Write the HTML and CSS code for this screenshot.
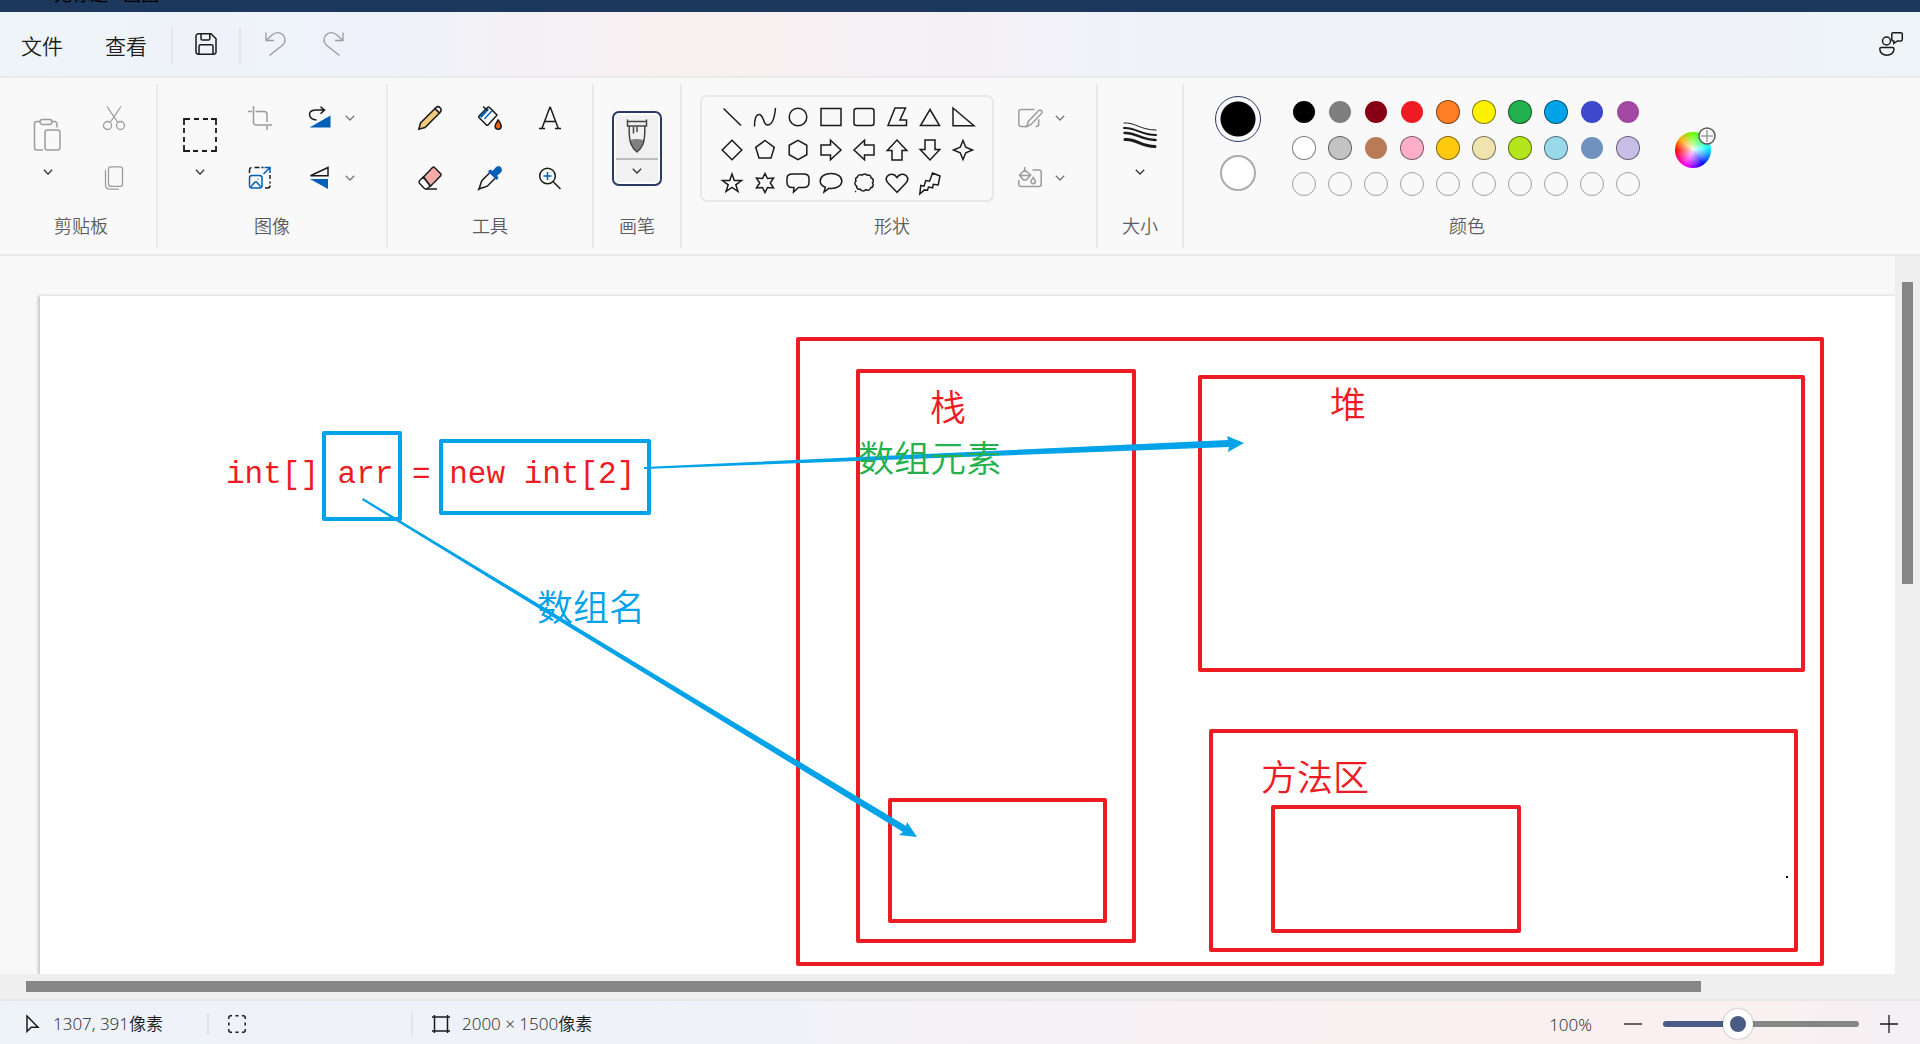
FILE: index.html
```html
<!DOCTYPE html>
<html lang="zh-CN">
<head>
<meta charset="utf-8">
<meta name="viewport" content="width=device-width, initial-scale=1">
<title>无标题 - 画图</title>
<link rel="stylesheet" href="styles.css">
</head>
<body>
<svg class="defs" aria-hidden="true">
  <symbol id="chevron" viewBox="0 0 10 6"><path d="M.8.8 5 5 9.200.8"/></symbol>
</svg>

<header class="titlebar"><span class="titlebar-text">无标题 - 画图</span></header>

<nav class="menubar">
  <button class="menu-item" type="button">文件</button>
  <button class="menu-item" type="button">查看</button>
  <span class="menu-sep"></span>
  <button class="menu-icon" type="button" aria-label="保存">
    <svg class="icon" viewBox="0 0 24 24"><path d="M4.500 1.800H17L22 6.800V20a2.200 2.200 0 0 1-2.200 2.200H4.200A2.200 2.200 0 0 1 2 20V4.300A2.500 2.500 0 0 1 4.500 1.800ZM7 2v4.700a1.300 1.300 0 0 0 1.300 1.300h6.200a1.300 1.300 0 0 0 1.300-1.300V2M5 22v-7.700A1.500 1.500 0 0 1 6.500 12.800h11a1.500 1.500 0 0 1 1.500 1.500V22"/></svg>
  </button>
  <span class="menu-sep"></span>
  <button class="menu-icon off" type="button" aria-label="撤消">
    <svg class="icon thin" viewBox="0 0 24 24"><path d="M2 .5V8.500H10M2.300 8.300 8 3C12-.5 17 0 19.500 3.500 21.800 7 21.300 10.500 18.500 13.300L5.500 23.500"/></svg>
  </button>
  <button class="menu-icon off" type="button" aria-label="重做">
    <svg class="icon thin" viewBox="0 0 24 24"><path d="M21 .5V8.500H13M20.700 8.300 15 3C11-.5 6 0 3.500 3.500 1.200 7 1.700 10.500 4.500 13.300L17.500 23.500"/></svg>
  </button>
  <button class="menu-icon share" type="button" aria-label="反馈">
    <svg class="icon" viewBox="0 0 24 24"><circle cx="7.500" cy="9" r="4"/><path d="M2 15.500h11.500a1.500 1.500 0 0 1 1.500 1.500c0 4-3.500 6.200-7.200 6.200S.8 21 .8 17A1.400 1.400 0 0 1 2 15.500ZM14 .8h8a1.300 1.300 0 0 1 1.300 1.300v5.500A1.300 1.300 0 0 1 22 8.900h-3.500l-3.700 2.500V8.900H14a1.300 1.300 0 0 1-1.200-1.300V2.100A1.300 1.300 0 0 1 14 .8Z"/></svg>
  </button>
</nav>

<div class="ribbon">
  <section class="group clipboard">
    <div class="controls">
      <button class="tool tall off" type="button" aria-label="粘贴">
        <svg class="icon big" viewBox="0 0 34 34"><path d="M12 32H6a2.500 2.500 0 0 1-2.500-2.500V6A2.500 2.500 0 0 1 6 3.500H9M20.500 3.500h3A2.500 2.500 0 0 1 26 6v3.500M11.500 1.500h7a2.500 2.500 0 0 1 0 5h-7a2.500 2.500 0 0 1 0-5Z"/><rect x="14" y="12" width="15" height="20" rx="2.500"/></svg>
        <svg class="chev dark"><use href="#chevron"/></svg>
      </button>
      <div class="pair">
        <button class="tool off" type="button" aria-label="剪切">
          <svg class="icon thin" viewBox="0 0 24 24"><path d="M5 .5 15.500 16M19 .5 8.500 16"/><circle cx="5.500" cy="19.500" r="4"/><circle cx="18.500" cy="19.500" r="4"/></svg>
        </button>
        <button class="tool off" type="button" aria-label="复制">
          <svg class="icon thin" viewBox="0 0 24 24"><rect x="6.500" y=".8" width="14" height="19.500" rx="2"/><path d="M3.500 4v14.500c0 3 1.500 4.700 4.500 4.700h9"/></svg>
        </button>
      </div>
    </div>
    <h2>剪贴板</h2>
  </section>

  <section class="group">
    <div class="controls">
      <button class="tool tall" type="button" aria-label="选择">
        <svg class="icon big" viewBox="0 0 34 34"><path stroke-width="1.800" d="M1 7V1h6M11 1h5M20 1h5M28 1h5v6M33 10v5M33 19v5M33 28v5h-5M24 33h-5M15 33h-5M7 33H1v-6M1 24v-5M1 15v-5"/></svg>
        <svg class="chev dark"><use href="#chevron"/></svg>
      </button>
      <div class="pair">
        <button class="tool off" type="button" aria-label="裁剪">
          <svg class="icon" viewBox="0 0 24 24"><path d="M0 5.500h4M7.500 5.500H16a3 3 0 0 1 3 3V16M19 20v4M5.500 0v16.500a3 3 0 0 0 3 2.500H24"/></svg>
        </button>
        <button class="tool" type="button" aria-label="重设大小">
          <svg class="icon" viewBox="0 0 24 24"><path d="M1.500 7V4a2.500 2.500 0 0 1 2-2.500M6.500 1.500h5M13.500 1.500h2M22 9v4M22 15.500v2M22 19.500a2.500 2.500 0 0 1-2.500 2.500H17"/><g class="blue"><rect x="1.500" y="9.500" width="12.500" height="12.500" rx="2.500"/><path d="m3 20.500 4-4.500h1.500l4 4.500M10 12.700v.8M15.500 8 22 1.500M16.500 1.500H22V7"/></g></svg>
        </button>
      </div>
      <div class="pair">
        <button class="tool split" type="button" aria-label="旋转">
          <svg class="icon" viewBox="0 0 24 24"><path d="M8.500 14C4.500 14 1.500 11.500 1.500 8.500S4.500 4 8.500 4h8M12.500.8 16.500 4l-4 3.800"/><path class="solid" d="M22.500 9.500v12h-21Z"/></svg>
          <svg class="chev"><use href="#chevron"/></svg>
        </button>
        <button class="tool split" type="button" aria-label="翻转">
          <svg class="icon" viewBox="0 0 24 24"><path d="M20 1.500v8.200H2.500Z"/><path class="solid" d="M20 23V13H2Z"/></svg>
          <svg class="chev"><use href="#chevron"/></svg>
        </button>
      </div>
    </div>
    <h2>图像</h2>
  </section>

  <section class="group">
    <div class="controls tools">
      <button class="tool" type="button" aria-label="铅笔">
        <svg class="icon" viewBox="0 0 24 24"><path fill="#eecb7c" d="M.8 23.200 2.500 17 17 2.500 21.500 7 7 21.500Z"/><path fill="#fff" d="m17 2.500 1-1c1.300-1.100 3-.9 4.100.3 1.200 1.200 1.300 2.900.3 4.100l-1 1Z"/></svg>
      </button>
      <button class="tool" type="button" aria-label="填充">
        <svg class="icon" viewBox="0 0 24 24"><path fill="#fff" d="M8.500 19 1 11.500a1 1 0 0 1 0-1.500L9.500 1.500a1.500 1.500 0 0 1 2 0L19 9l-9 10a1 1 0 0 1-1.500 0Z"/><path class="solid" d="M1.500 10 9.500 2l1.500 1.500-7.500 8.500Z"/><path class="blue" d="m6.300 13 7.500-8"/><path d="m5 .5 4.500 4"/><path fill="#f7630c" d="M20.200 14c2 3 3 4.500 3 6.200a3 3 0 0 1-6 0c0-1.700 1-3.200 3-6.200Z"/></svg>
      </button>
      <button class="tool" type="button" aria-label="文本">
        <svg class="icon" viewBox="0 0 24 24"><path d="M4 22.200 11.800 1.500h.6L20.200 22.200M6.700 15.500h10.700M1 22.500h6M17 22.500h6"/></svg>
      </button>
      <button class="tool" type="button" aria-label="橡皮擦">
        <svg class="icon" viewBox="0 0 24 24"><path fill="#f5aaaa" d="M5.500 11 14.500 1.500a1.500 1.500 0 0 1 2 0l6.200 6.200a1.500 1.500 0 0 1 0 2L12.500 20.200Z"/><path fill="#fff" d="M5.200 11 1.500 14.700a2 2 0 0 0 0 2.600l4.700 4.900a2.500 2.500 0 0 0 3.500 0l2.500-2.200Z"/><path d="M8 23h11"/></svg>
      </button>
      <button class="tool" type="button" aria-label="颜色选取器">
        <svg class="icon" viewBox="0 0 24 24"><path d="M11.500 7 3.800 14.800C2.500 17 3 18.500.8 23.200c4.700-2.200 6.200-1.700 8.400-3L17 12.500"/><path class="solid" d="M10 5.500 12 3.500l2.800 1.200L17 2.200C19-.2 22-.2 23.200 1.700c1.300 1.800.8 4-1 5.500l-3 2.300 1.300 2.500-2 2Z"/></svg>
      </button>
      <button class="tool" type="button" aria-label="放大镜">
        <svg class="icon" viewBox="0 0 24 24"><circle cx="9.500" cy="10" r="7.800"/><path d="m15 15.500 7.500 7.500"/><path class="blue" d="M9.500 6v8M5.500 10h8"/></svg>
      </button>
    </div>
    <h2>工具</h2>
  </section>

  <section class="group brushes">
    <div class="controls">
      <button class="brush" type="button" aria-label="画笔">
        <span class="brush-face"><svg class="icon brush-icon" viewBox="0 0 22 34"><path fill="#808080" stroke="none" d="M4 21c4-1.500 9-1.500 14 0-.5 4-3.500 9-7 12-3.500-3-6.500-8-7-12Z"/><path d="M1.500.5v6.500h19V.5M1.500 2.500h19M3.200 7.500C3 15 3 20 5 25c1.200 3 3 5.500 6 8 3-2.500 4.800-5 6-8 2-5 2-10 1.800-17.500M7.500 8v6.500M11 8v5"/></svg></span>
        <span class="brush-more"><svg class="chev dark"><use href="#chevron"/></svg></span>
      </button>
    </div>
    <h2>画笔</h2>
  </section>

  <section class="group shapes">
    <div class="controls">
      <div class="gallery">
        <button type="button" aria-label="直线"><svg class="icon" viewBox="0 0 24 24"><path d="m3.500 3.500 17.500 17"/></svg></button>
        <button type="button" aria-label="曲线"><svg class="icon" viewBox="0 0 24 24"><path d="M1.500 21.500C1.500 14 3 9.500 6 9.500c5 0 4 10.500 8.500 10.500 4 0 7-6 8-17"/></svg></button>
        <button type="button" aria-label="椭圆"><svg class="icon" viewBox="0 0 24 24"><circle cx="12" cy="12" r="8.800"/></svg></button>
        <button type="button" aria-label="矩形"><svg class="icon" viewBox="0 0 24 24"><path d="M2 3.500h20v17H2Z"/></svg></button>
        <button type="button" aria-label="圆角矩形"><svg class="icon" viewBox="0 0 24 24"><rect x="2" y="3.500" width="20" height="17" rx="2.500"/></svg></button>
        <button type="button" aria-label="多边形"><svg class="icon" viewBox="0 0 24 24"><path d="M10 3h10.500l-5.500 12h6.500v5.500H3Z"/></svg></button>
        <button type="button" aria-label="三角形"><svg class="icon" viewBox="0 0 24 24"><path d="m12 4.500 9.500 16h-19Z"/></svg></button>
        <button type="button" aria-label="直角三角形"><svg class="icon" viewBox="0 0 24 24"><path d="M2 3v17.800h21Z"/></svg></button>
        <button type="button" aria-label="菱形"><svg class="icon" viewBox="0 0 24 24"><path d="M12 2.200 21.800 12 12 21.800 2.200 12Z"/></svg></button>
        <button type="button" aria-label="五边形"><svg class="icon" viewBox="0 0 24 24"><path d="m12 2.500 9.300 6.800L18 20H6L2.700 9.300Z"/></svg></button>
        <button type="button" aria-label="六边形"><svg class="icon" viewBox="0 0 24 24"><path d="m12 2.300 8.800 5v9.400l-8.800 5-8.800-5V7.300Z"/></svg></button>
        <button type="button" aria-label="右箭头"><svg class="icon" viewBox="0 0 24 24"><path d="M2 7h9.500V2.200L22 12 11.500 21.800V17H2Z"/></svg></button>
        <button type="button" aria-label="左箭头"><svg class="icon" viewBox="0 0 24 24"><path d="M22 7h-9.500V2.200L2 12l10.500 9.800V17H22Z"/></svg></button>
        <button type="button" aria-label="上箭头"><svg class="icon" viewBox="0 0 24 24"><path d="M7 22v-9.500H2.200L12 2l9.800 10.500H17V22Z"/></svg></button>
        <button type="button" aria-label="下箭头"><svg class="icon" viewBox="0 0 24 24"><path d="M7 2v9.500H2.200L12 22l9.800-10.500H17V2Z"/></svg></button>
        <button type="button" aria-label="四角星"><svg class="icon" viewBox="0 0 24 24"><path d="m12 2.500 2.800 6.700 6.700 2.800-6.700 2.800L12 21.500l-2.800-6.700L2.500 12l6.700-2.800Z"/></svg></button>
        <button type="button" aria-label="五角星"><svg class="icon" viewBox="0 0 24 24"><path d="m12 3 2.300 6.500H21.500l-5.700 4.300L18 20.500l-6-4-6 4 2.200-6.700L2.500 9.500h7.200Z"/></svg></button>
        <button type="button" aria-label="六角星"><svg class="icon" viewBox="0 0 24 24"><path d="m12 2.500 2.500 5 6-.5-3.200 5 3.200 5-6-.5-2.500 5-2.500-5-6 .5 3.200-5-3.200-5 6 .5Z"/></svg></button>
        <button type="button" aria-label="圆角矩形标注"><svg class="icon" viewBox="0 0 24 24"><path d="M6.500 3h11c3.500 0 5.500 2 5.500 4.500v4c0 3-2 5-5.500 5h-5L7.500 21l.5-4.500H6.500c-3.500 0-5.500-2-5.500-5v-4C1 5 3 3 6.500 3Z"/></svg></button>
        <button type="button" aria-label="椭圆形标注"><svg class="icon" viewBox="0 0 24 24"><path d="M12 2.500c6.500 0 10.800 3.300 10.800 7.500s-4.300 7.500-10.800 7.500c-1 0-1.500 0-2.200-.2L5 21l1.300-4.700C3 15 1.200 13 1.200 10 1.200 5.800 5.500 2.500 12 2.500Z"/></svg></button>
        <button type="button" aria-label="云形标注"><svg class="icon" viewBox="0 0 24 24"><path d="M5.500 6c.3-2 3-3 4.500-1.800 1.500-1.800 4-1.500 5 0 2-.8 4 .5 4 2.500 2.500.8 3 3.500 1.500 5 1.500 2 .5 4.800-1.800 5-.5 2.500-3.200 3.300-5 2-1.500 1.800-4.500 1.500-5.500-.5-2 .5-4-1-3.500-3-2-1-2.500-4-.7-5.200C3 8.500 3.700 6.500 5.500 6ZM3 20.500h1.200"/></svg></button>
        <button type="button" aria-label="心形"><svg class="icon" viewBox="0 0 24 24"><path d="M12 21.300 3.500 12.500C1 10 .8 7 2.500 5c2.500-2.800 7-2.300 9.500 1.500C14.500 2.700 19 2.200 21.500 5c1.700 2 1.500 5-1 7.500Z"/></svg></button>
        <button type="button" aria-label="闪电形"><svg class="icon" viewBox="0 0 24 24"><path d="m14.500 2 7.500 3-1.800 9-5-.7-.5 3.500-4.200-.8-1 3.200-3-.3L1.800 23l1-8.500 3.200.7L7.800 9.500l3.700.7L12.800 7Z"/></svg></button>
      </div>
      <div class="pair">
        <button class="tool split off" type="button" aria-label="形状轮廓">
          <svg class="icon" viewBox="0 0 24 24"><path d="M16.500 3.500H3A2.200 2.200 0 0 0 .8 5.700v12.500a2.200 2.200 0 0 0 2.200 2.200h5M17.500 20.500h1.200a2.200 2.200 0 0 0 2-2.200v-5M8.800 20.500l1.500-5L20.500 4.700a2 2 0 0 1 2.700 3L13 18.500Z"/></svg>
          <svg class="chev"><use href="#chevron"/></svg>
        </button>
        <button class="tool split off" type="button" aria-label="形状填充">
          <svg class="icon" viewBox="0 0 24 24"><path d="M14.500 4H21a2.200 2.200 0 0 1 2.200 2.200v12A2.200 2.200 0 0 1 21 20.400H3a2.200 2.200 0 0 1-2.200-2.200V14M6.700 1v5M1.500 9l5.200-5 6 5-4.500 5H5.300ZM1.500 9.500h11M15.200 11.500c1.500 2 2.200 3 2.200 4a2.200 2.200 0 0 1-4.400 0c0-1 .7-2 2.200-4Z"/></svg>
          <svg class="chev"><use href="#chevron"/></svg>
        </button>
      </div>
    </div>
    <h2>形状</h2>
  </section>

  <section class="group size">
    <div class="controls">
      <button class="tool tall" type="button" aria-label="大小">
        <svg class="icon big" viewBox="0 0 34 34" stroke-linecap="round"><path stroke-width="1" d="M1 5c11-1 16 7 32 7"/><path stroke-width="2" d="M1 10c11-1 16 7 32 7"/><path stroke-width="2.500" d="M1.500 15c11-1 16 7 31 7"/><path stroke-width="3" d="M2 21.500c11-1 16 7 30 7"/></svg>
        <svg class="chev dark"><use href="#chevron"/></svg>
      </button>
    </div>
    <h2>大小</h2>
  </section>

  <section class="group colors">
    <div class="controls">
      <div class="active-colors">
        <button class="primary" type="button" aria-label="颜色 1"></button>
        <button class="secondary" type="button" aria-label="颜色 2"></button>
      </div>
      <div class="palette">
        <button class="swatch black" type="button" aria-label="黑色"></button>
        <button class="swatch gray" type="button" aria-label="灰色"></button>
        <button class="swatch maroon" type="button" aria-label="深红色"></button>
        <button class="swatch red" type="button" aria-label="红色"></button>
        <button class="swatch orange ring" type="button" aria-label="橙色"></button>
        <button class="swatch yellow ring" type="button" aria-label="黄色"></button>
        <button class="swatch green ring" type="button" aria-label="绿色"></button>
        <button class="swatch azure ring" type="button" aria-label="青绿色"></button>
        <button class="swatch indigo" type="button" aria-label="靛蓝色"></button>
        <button class="swatch purple" type="button" aria-label="紫色"></button>
        <button class="swatch white ring" type="button" aria-label="白色"></button>
        <button class="swatch silver ring" type="button" aria-label="浅灰色"></button>
        <button class="swatch brown" type="button" aria-label="褐色"></button>
        <button class="swatch rose ring" type="button" aria-label="玫瑰色"></button>
        <button class="swatch gold ring" type="button" aria-label="金色"></button>
        <button class="swatch cream ring" type="button" aria-label="浅黄色"></button>
        <button class="swatch lime ring" type="button" aria-label="酸橙色"></button>
        <button class="swatch aqua ring" type="button" aria-label="淡青绿色"></button>
        <button class="swatch steel" type="button" aria-label="蓝灰色"></button>
        <button class="swatch lavender ring" type="button" aria-label="淡紫色"></button>
        <button class="swatch empty" type="button" aria-label="自定义 1"></button>
        <button class="swatch empty" type="button" aria-label="自定义 2"></button>
        <button class="swatch empty" type="button" aria-label="自定义 3"></button>
        <button class="swatch empty" type="button" aria-label="自定义 4"></button>
        <button class="swatch empty" type="button" aria-label="自定义 5"></button>
        <button class="swatch empty" type="button" aria-label="自定义 6"></button>
        <button class="swatch empty" type="button" aria-label="自定义 7"></button>
        <button class="swatch empty" type="button" aria-label="自定义 8"></button>
        <button class="swatch empty" type="button" aria-label="自定义 9"></button>
        <button class="swatch empty" type="button" aria-label="自定义 10"></button>
      </div>
      <button class="wheel" type="button" aria-label="编辑颜色">
        <svg class="wheel-plus" viewBox="0 0 18 18"><circle cx="9" cy="9" r="8" fill="#f9f9f9" stroke="#5c5c5c" stroke-width="1.500"/><path d="M9 3v12M3 9h12" stroke="#a0a0a0" stroke-width="1.500"/></svg>
      </button>
    </div>
    <h2>颜色</h2>
  </section>
</div>

<main class="workspace">
  <div class="viewport">
    <svg class="canvas" width="2000" height="1500" viewBox="0 0 2000 1500">
      <g class="box-red">
        <rect x="758" y="43" width="1024" height="625"/>
        <rect x="818" y="75" width="276" height="570"/>
        <rect x="850" y="504" width="215" height="121"/>
        <rect x="1160" y="81" width="603" height="293"/>
        <rect x="1171" y="435" width="585" height="219"/>
        <rect x="1233" y="511" width="246" height="124"/>
      </g>
      <g class="box-blue">
        <rect x="284" y="137" width="76" height="86"/>
        <rect x="401" y="145" width="208" height="72"/>
      </g>
      <g class="arrow">
        <path d="M604 171 1188 144 1187 140 1204 147 1188 156 1189 151 604 173Z"/>
        <path d="M323 202 866 530 867 526 877 541 859 539 863 536 322 204Z"/>
      </g>
      <rect x="1746" y="580" width="2" height="2"/>
      <text class="code" x="186" y="187">int[] arr = new int[2]</text>
      <text class="note red-text" x="890" y="125">栈</text>
      <text class="note red-text" x="1290" y="122">堆</text>
      <text class="note green-text" x="818" y="176">数组元素</text>
      <text class="note red-text" x="1221" y="495">方法区</text>
      <text class="note blue-text" x="497" y="325">数组名</text>
    </svg>
  </div>
  <div class="scroll-y"><div class="thumb" style="height:45.4%"></div></div>
  <div class="scroll-x"><div class="thumb" style="width:90.9%"></div></div>
</main>

<footer class="statusbar">
  <div class="status position">
    <svg class="icon small" viewBox="0 0 18 18"><path d="M3 1v15.500l4.200-4.300H14Z"/></svg>
    <span>1307, 391像素</span>
  </div>
  <div class="status selection">
    <svg class="icon small" viewBox="0 0 18 18"><path d="M.8 4V2.500A1.700 1.700 0 0 1 2.500.8H4M7.500.8h3M14 .8h1.500a1.700 1.700 0 0 1 1.700 1.700V4M17.200 7.500v3M17.200 14v1.500a1.700 1.700 0 0 1-1.700 1.700H14M10.500 17.200h-3M4 17.200H2.500a1.700 1.700 0 0 1-1.700-1.700V14M.8 10.500v-3"/></svg>
  </div>
  <div class="status">
    <svg class="icon small" viewBox="0 0 18 18"><path d="M2.500 0v18M15.500 0v18M0 2h18M0 16h18"/></svg>
    <span>2000 × 1500像素</span>
  </div>
  <div class="zoom">
    <label for="zoom">100%</label>
    <button type="button" aria-label="缩小"><svg class="icon small thin" viewBox="0 0 18 18"><path d="M0 9h18"/></svg></button>
    <input id="zoom" type="range" min="0" max="100" value="36">
    <button type="button" aria-label="放大"><svg class="icon small thin" viewBox="0 0 18 18"><path d="M0 9h18M9 0v18"/></svg></button>
  </div>
</footer>
</body>
</html>
```

FILE: styles.css
```css
* { box-sizing: border-box; }

body {
  margin: 0;
  height: 100vh;
  display: flex;
  flex-direction: column;
  overflow: hidden;
  background: #f9f9f9;
  color: #1b1b1b;
  font-family: "Open Sans", "Noto Sans CJK SC", sans-serif;
  font-weight: 350;
}

button {
  margin: 0;
  padding: 0;
  border: 0;
  background: none;
  color: inherit;
  font: inherit;
}

.defs { display: none; }

.icon {
  display: block;
  flex: none;
  width: 24px;
  height: 24px;
  fill: none;
  stroke: #1b1b1b;
  stroke-width: 1.5;
  overflow: visible;
}
.icon.big { width: 34px; height: 34px; }
.icon.small { width: 18px; height: 18px; }
.icon.thin { stroke-width: 1.3; }
.off .icon { stroke: #9c9c9c; }
.icon .blue { stroke: #005fb8; }
.icon .solid { fill: #005fb8; stroke: none; }

.chev {
  display: block;
  flex: none;
  width: 10px;
  height: 6px;
  fill: none;
  stroke: #777;
  stroke-width: 1.3;
}
.chev.dark { stroke: #333; }

/* window title */
.titlebar {
  flex: none;
  height: 12px;
  overflow: hidden;
  background: #1c385c;
}
.titlebar-text {
  display: block;
  margin-top: -16px;
  padding-left: 54px;
  color: #000;
  font-size: 18px;
  font-weight: 400;
  line-height: 20px;
}

/* menu */
.menubar {
  flex: none;
  display: flex;
  align-items: center;
  height: 66px;
  padding: 4px 16px 0;
  border-bottom: 2px solid #eaeaea;
  background: linear-gradient(90deg, #eef4f8 0%, #eff2fa 20%, #f9f0f0 36%, #f0f2fa 60%, #eff2f8 85%, #eef4f8 100%);
}
.menu-item {
  width: 52px;
  margin-right: 32px;
  font-size: 21px;
  line-height: 32px;
}
.menu-item + .menu-item { margin-right: 19px; }
.menu-sep {
  width: 2px;
  height: 36px;
  background: #e2e5ea;
}
.menu-icon {
  display: flex;
  align-items: center;
  justify-content: center;
  width: 58px;
  height: 40px;
  margin: 0 4px 4px;
}
.menu-sep + .menu-icon.off { margin-left: 6px; margin-right: 0; }
.menu-icon.off + .menu-icon.off { margin-left: 0; }
.menu-icon.share { width: 24px; margin-left: auto; margin-right: 1px; }

/* ribbon */
.ribbon {
  flex: none;
  display: flex;
  height: 178px;
  padding: 6px 0;
  border-bottom: 2px solid #eaeaea;
}
.group {
  flex: none;
  display: flex;
  flex-direction: column;
  align-items: center;
  justify-content: space-between;
  padding: 4px 12px 8px;
  border-right: 2px solid #eaeaea;
}
.group h2 {
  margin: 0;
  color: #5c5c5c;
  font-size: 18px;
  font-weight: 350;
  line-height: 28px;
}
.controls {
  display: flex;
  height: 120px;
}
.pair {
  display: grid;
  grid-template-rows: 60px 60px;
}
.tool {
  display: flex;
  align-items: center;
  justify-content: center;
  width: 60px;
  height: 60px;
}
.tool.tall {
  flex-direction: column;
  gap: 17px;
  height: 120px;
  padding-bottom: 4px;
}
.tool.split {
  justify-content: flex-start;
  gap: 13px;
  width: 84px;
  padding-left: 18px;
}
.clipboard { padding-left: 18px; }
.clipboard .controls { gap: 6px; }
.tools {
  display: grid;
  grid-template-columns: repeat(3, 60px);
  grid-template-rows: 60px 60px;
}
.brushes { padding-left: 18px; padding-right: 18px; }
.brushes .controls { align-items: center; }
.brush {
  display: grid;
  grid-template-rows: 45px 22px;
  width: 50px;
  height: 75px;
  padding: 2px;
  border: 2px solid #2b3a67;
  border-radius: 7px;
  background: #fff;
}
.brush-face,
.brush-more {
  display: flex;
  align-items: center;
  justify-content: center;
  background: #f1f1f1;
}
.brush-face { border-bottom: 2px solid #bdbdbd; }
.icon.brush-icon { width: 22px; height: 34px; stroke: #444; }

.shapes { padding-left: 18px; }
.gallery {
  display: grid;
  grid-template-columns: repeat(8, 33px);
  grid-template-rows: repeat(3, 33px);
  align-self: center;
  padding: 4px 13px 0;
  border: 2px solid #e8e8e8;
  border-radius: 7px;
}
.gallery button {
  display: flex;
  align-items: center;
  justify-content: center;
}
.shapes .pair { margin-left: 6px; }
.colors {
  border-right: 0;
  padding-left: 31px;
}
.active-colors {
  display: flex;
  flex-direction: column;
  align-items: center;
  gap: 13px;
  width: 46px;
  padding-top: 8px;
}
.primary {
  width: 46px;
  height: 46px;
  border: 1px solid #2b3a67;
  border-radius: 50%;
  background: radial-gradient(circle, #000 17px, #f9f9f9 18px);
}
.secondary {
  width: 36px;
  height: 36px;
  border: 2px solid #ababab;
  border-radius: 50%;
  background: #fff;
}
.palette {
  display: grid;
  grid-template-columns: repeat(10, 24px);
  grid-auto-rows: 24px;
  gap: 12px;
  margin-left: 31px;
  padding-top: 12px;
}
.swatch {
  border: 1px solid transparent;
  border-radius: 50%;
  background-clip: padding-box;
}
.swatch.ring {
  border-color: rgba(0, 0, 0, .5);
  background-clip: border-box;
}
.swatch.empty { border-color: #a0a0a0; }
.black { background-color: #000; }
.gray { background-color: #7f7f7f; }
.maroon { background-color: #880015; }
.red { background-color: #ed1c24; }
.orange { background-color: #ff7f27; }
.yellow { background-color: #fff200; }
.green { background-color: #22b14c; }
.azure { background-color: #00a2e8; }
.indigo { background-color: #3f48cc; }
.purple { background-color: #a349a4; }
.white { background-color: #fff; }
.silver { background-color: #c3c3c3; }
.brown { background-color: #b97a57; }
.rose { background-color: #ffaec9; }
.gold { background-color: #ffc90e; }
.cream { background-color: #efe4b0; }
.lime { background-color: #b5e61d; }
.aqua { background-color: #99d9ea; }
.steel { background-color: #7092be; }
.lavender { background-color: #c8bfe7; }

.wheel {
  position: relative;
  align-self: center;
  width: 36px;
  height: 36px;
  margin-top: 4px;
  margin-left: 35px;
  margin-right: 8px;
  border-radius: 50%;
  background:
    radial-gradient(circle, rgba(255, 255, 255, .9), rgba(255, 255, 255, 0) 68%),
    conic-gradient(#6f0, #0f6 45deg, #0ff 80deg, #06f 120deg, #00f 145deg, #f0f 205deg, #f06 245deg, #f00 270deg, #fa0 310deg, #6f0);
}
.wheel-plus {
  position: absolute;
  top: -5px;
  right: -5px;
  width: 18px;
  height: 18px;
}

/* canvas and scrollbars */
.workspace {
  flex: 1;
  min-height: 0;
  display: grid;
  grid-template-columns: minmax(0, 1fr) 25px;
  grid-template-rows: minmax(0, 1fr) 25px;
  background: #efefef;
}
.viewport {
  overflow: hidden;
  padding: 40px 0 0 40px;
  background: #f8f8f8;
}
.canvas {
  display: block;
  background: #fff;
  box-shadow: -2px 0 3px rgba(0, 0, 0, .2);
}
.box-red,
.box-blue {
  fill: none;
  stroke: #ed1c24;
  stroke-width: 4;
  stroke-linejoin: round;
}
.box-blue { stroke: #00a2e8; }
.arrow { fill: #00a2e8; }
.code {
  fill: #ed1c24;
  font-family: "Liberation Mono", monospace;
  font-size: 31px;
  font-weight: 400;
  white-space: pre;
}
.note {
  font-family: "Noto Sans CJK SC", sans-serif;
  font-size: 36px;
}
.red-text { fill: #ed1c24; }
.green-text { fill: #22b14c; }
.blue-text { fill: #00a2e8; }

.scroll-y { padding: 26px 7px; }
.scroll-x { padding: 7px 26px; }
.thumb { background: #868686; }
.scroll-x .thumb { height: 11px; }

/* status bar */
.statusbar {
  flex: none;
  display: flex;
  align-items: center;
  height: 45px;
  padding-top: 3px;
  border-top: 2px solid #e8e8e8;
  background: linear-gradient(90deg, #eef3f8 0%, #eff2f9 35%, #f7f1f4 60%, #faf0f0 80%, #f9f0f1 92%, #f4f0f4 100%);
  font-size: 17px;
}
.status {
  display: flex;
  align-items: center;
  gap: 12px;
  height: 22px;
  padding-left: 19px;
  line-height: 22px;
}
.position {
  width: 209px;
  padding-left: 24px;
  gap: 11px;
  border-right: 2px solid #e0e3e8;
}
.selection {
  width: 204px;
  border-right: 2px solid #e0e3e8;
}
.zoom {
  display: flex;
  align-items: center;
  margin-left: auto;
  padding-right: 22px;
}
.zoom label { margin-right: 32px; }
.zoom input {
  width: 196px;
  height: 32px;
  margin: 0 21px;
  background: none;
  appearance: none;
}
.zoom input::-webkit-slider-runnable-track {
  height: 6px;
  border-radius: 3px;
  background: linear-gradient(90deg, #4a5b85 38%, #868686 38%);
}
.zoom input::-webkit-slider-thumb {
  width: 30px;
  height: 30px;
  margin-top: -12px;
  border: 7px solid #fff;
  border-radius: 50%;
  background: #4a5b85;
  box-shadow: 0 0 2px rgba(0, 0, 0, .4);
  appearance: none;
}
```
